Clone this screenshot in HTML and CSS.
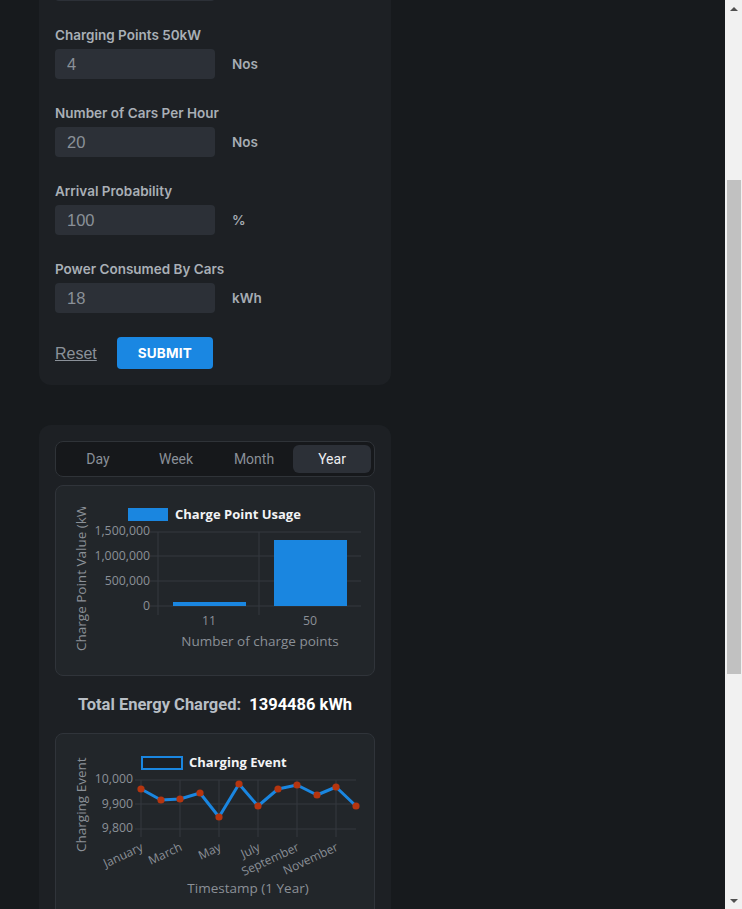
FILE: index.html
```html
<!DOCTYPE html>
<html lang="en">
<head>
<meta charset="utf-8">
<title>Charging Simulation</title>
<link rel="stylesheet" href="styles.css">
</head>
<body>
<main class="page">
  <section class="card">
    <h2 class="card-title">Simulation Parameters</h2>
    <div class="fields">
      <div class="field">
        <label class="field-label">Charging Points 7kW</label>
        <div class="input-row"><input class="num-input" type="text" value="6" readonly><span class="unit">Nos</span></div>
      </div>
      <div class="field">
        <label class="field-label">Charging Points 11kW</label>
        <div class="input-row"><input class="num-input" type="text" value="2" readonly><span class="unit">Nos</span></div>
      </div>
      <div class="field">
        <label class="field-label">Charging Points 22kW</label>
        <div class="input-row"><input class="num-input" type="text" value="0" readonly><span class="unit">Nos</span></div>
      </div>
      <div class="field">
        <label class="field-label">Charging Points 50kW</label>
        <div class="input-row"><input class="num-input" type="text" value="4" readonly><span class="unit">Nos</span></div>
      </div>
      <div class="field">
        <label class="field-label">Number of Cars Per Hour</label>
        <div class="input-row"><input class="num-input" type="text" value="20" readonly><span class="unit">Nos</span></div>
      </div>
      <div class="field">
        <label class="field-label">Arrival Probability</label>
        <div class="input-row"><input class="num-input" type="text" value="100" readonly><span class="unit">%</span></div>
      </div>
      <div class="field">
        <label class="field-label">Power Consumed By Cars</label>
        <div class="input-row"><input class="num-input" type="text" value="18" readonly><span class="unit">kWh</span></div>
      </div>
    </div>
    <div class="actions">
      <a class="reset-link" href="#">Reset</a>
      <button class="submit-btn" type="button">SUBMIT</button>
    </div>
  </section>

  <section class="card">
    <div class="tabs">
      <button class="tab" type="button">Day</button>
      <button class="tab" type="button">Week</button>
      <button class="tab" type="button">Month</button>
      <button class="tab tab-active" type="button">Year</button>
    </div>

    <div class="chart-box">
      <svg class="chart" width="318" height="189" viewBox="0 0 318 189">
        <defs>
          <clipPath id="clipTitle"><rect x="0" y="21" width="60" height="168"/></clipPath>
        </defs>
        <rect x="72" y="22" width="40" height="13" fill="#1a86e0"/>
        <text class="legend-text" x="119" y="33">Charge Point Usage</text>
        <g clip-path="url(#clipTitle)">
          <text class="axis-title" transform="translate(30,165) rotate(-90)">Charge Point Value (kWh)</text>
        </g>
        <g class="grid">
          <line x1="94" y1="46" x2="305" y2="46"/>
          <line x1="94" y1="70" x2="305" y2="70"/>
          <line x1="94" y1="95" x2="305" y2="95"/>
          <line x1="94" y1="120" x2="305" y2="120"/>
          <line x1="102" y1="46" x2="102" y2="129"/>
          <line x1="203" y1="46" x2="203" y2="129"/>
        </g>
        <g class="tick-y">
          <text x="94" y="49">1,500,000</text>
          <text x="94" y="74">1,000,000</text>
          <text x="94" y="99">500,000</text>
          <text x="94" y="124">0</text>
        </g>
        <rect x="117" y="116" width="73" height="4" fill="#1a86e0"/>
        <rect x="218" y="54" width="73" height="66" fill="#1a86e0"/>
        <g class="tick-x">
          <text x="153" y="139">11</text>
          <text x="254" y="139">50</text>
        </g>
        <text class="axis-title center" x="204" y="160">Number of charge points</text>
      </svg>
    </div>

    <p class="total">
      <span class="total-label">Total Energy Charged:</span>
      <span class="total-value">1394486 kWh</span>
    </p>

    <div class="chart-box">
      <svg class="chart" width="318" height="189" viewBox="0 0 318 189">
        <rect x="86" y="23" width="40" height="12" fill="#1b1f24" stroke="#1a86e0" stroke-width="2"/>
        <text class="legend-text" x="133" y="33">Charging Event</text>
        <text class="axis-title" transform="translate(30,118) rotate(-90)">Charging Event</text>
        <g class="grid">
          <line x1="79" y1="46" x2="300" y2="46"/>
          <line x1="79" y1="70" x2="300" y2="70"/>
          <line x1="79" y1="95" x2="300" y2="95"/>
          <line x1="85" y1="46" x2="85" y2="103"/>
          <line x1="124" y1="46" x2="124" y2="103"/>
          <line x1="163" y1="46" x2="163" y2="103"/>
          <line x1="202" y1="46" x2="202" y2="103"/>
          <line x1="241" y1="46" x2="241" y2="103"/>
          <line x1="280" y1="46" x2="280" y2="103"/>
        </g>
        <g class="tick-y">
          <text x="77" y="49">10,000</text>
          <text x="77" y="74">9,900</text>
          <text x="77" y="98">9,800</text>
        </g>
        <polyline fill="none" stroke="#1a86e0" stroke-width="3" stroke-linejoin="round"
          points="85,55 105,66 124,65 144,59 163,83 183,50 202,72 222,55 241,51 261,61 280,53 300,72"/>
        <g fill="#b5350f">
          <circle cx="85" cy="55" r="3.6"/>
          <circle cx="105" cy="66" r="3.6"/>
          <circle cx="124" cy="65" r="3.6"/>
          <circle cx="144" cy="59" r="3.6"/>
          <circle cx="163" cy="83" r="3.6"/>
          <circle cx="183" cy="50" r="3.6"/>
          <circle cx="202" cy="72" r="3.6"/>
          <circle cx="222" cy="55" r="3.6"/>
          <circle cx="241" cy="51" r="3.6"/>
          <circle cx="261" cy="61" r="3.6"/>
          <circle cx="280" cy="53" r="3.6"/>
          <circle cx="300" cy="72" r="3.6"/>
        </g>
        <g class="tick-x-rot">
          <text transform="translate(88,116) rotate(-25)">January</text>
          <text transform="translate(127,116) rotate(-25)">March</text>
          <text transform="translate(166,116) rotate(-25)">May</text>
          <text transform="translate(205,116) rotate(-25)">July</text>
          <text transform="translate(244,116) rotate(-25)">September</text>
          <text transform="translate(283,116) rotate(-25)">November</text>
        </g>
        <text class="axis-title center" x="192" y="159">Timestamp (1 Year)</text>
      </svg>
    </div>
  </section>
</main>

<div class="scrollbar" aria-hidden="true">
  <span class="sb-arrow sb-up"></span>
  <div class="sb-track"><div class="sb-thumb"></div></div>
  <span class="sb-arrow sb-down"></span>
</div>

<script src="script.js"></script>
</body>
</html>
```

FILE: styles.css
```css
html, body {
  margin: 0;
  padding: 0;
  background: #171a1d;
}

body {
  font-family: "Liberation Sans", Arial, sans-serif;
  color: #e6e8eb;
}

.page {
  width: 352px;
  padding: 24px 0 370px 39px;
  display: flex;
  flex-direction: column;
  gap: 40px;
}

.card {
  background: #1d2024;
  border-radius: 12px;
  padding: 16px;
}

.card-title {
  margin: 0 0 24px;
  font: 700 18px/28px Inter, "Noto Sans", sans-serif;
  color: #d6dadf;
}

.fields {
  display: flex;
  flex-direction: column;
  gap: 25px;
}

.field {
  display: flex;
  flex-direction: column;
  gap: 5px;
}

.field-label {
  font: 600 13.5px/18px Inter, "Noto Sans", sans-serif;
  color: #a9afb6;
}

.input-row {
  display: flex;
  align-items: center;
  gap: 17px;
}

.num-input {
  box-sizing: border-box;
  width: 160px;
  height: 30px;
  border: none;
  outline: none;
  border-radius: 4px;
  background: #2c3037;
  padding: 0 12px;
  font: 16.5px "Liberation Sans", Arial, sans-serif;
  color: #8a9098;
}

.unit {
  font: 600 13.5px Inter, "Noto Sans", sans-serif;
  color: #a6acb3;
}

.actions {
  margin-top: 24px;
  display: flex;
  align-items: center;
  gap: 20px;
}

.reset-link {
  font: 16px "Liberation Sans", Arial, sans-serif;
  color: #8b9199;
  text-decoration: underline;
  padding-top: 1px;
}

.submit-btn {
  width: 96px;
  height: 32px;
  border: none;
  border-radius: 4px;
  background: #1a87e2;
  color: #ffffff;
  font: 700 13.5px Inter, "Noto Sans", sans-serif;
  letter-spacing: 0.2px;
  padding: 0;
}

.tabs {
  box-sizing: border-box;
  height: 36px;
  display: grid;
  grid-template-columns: repeat(4, 1fr);
  padding: 3px;
  border: 1px solid #2f3338;
  border-radius: 8px;
  background: #16181b;
}

.tab {
  border: none;
  background: transparent;
  border-radius: 6px;
  font: 14px Roboto, "Liberation Sans", sans-serif;
  color: #8a9098;
  padding: 0;
}

.tab-active {
  background: #2c3037;
  color: #eceef0;
}

.chart-box {
  margin-top: 8px;
  border: 1px solid #30343a;
  border-radius: 8px;
  background: #22262a;
  height: 189px;
}

.total + .chart-box {
  margin-top: 0;
}

.chart {
  display: block;
  font-family: "Open Sans", Roboto, sans-serif;
}

.legend-text {
  font-size: 13px;
  font-weight: 700;
  fill: #f2f3f5;
}

.axis-title {
  font-size: 13.5px;
  fill: #8b9097;
}

.axis-title.center {
  text-anchor: middle;
}

.grid line {
  stroke: #34383e;
  stroke-width: 1;
}

.tick-y text {
  font-size: 12.3px;
  fill: #8b9097;
  text-anchor: end;
}

.tick-x text {
  font-size: 12.3px;
  fill: #8b9097;
  text-anchor: middle;
}

.tick-x-rot text {
  font-size: 12px;
  fill: #8b9097;
  text-anchor: end;
}

.total {
  margin: 0;
  padding: 18px 0;
  text-align: center;
  font: 700 16.5px/21px Roboto, "Open Sans", sans-serif;
}

.total-label {
  color: #b8bec5;
  margin-right: 4px;
}

.total-value {
  color: #ffffff;
}

/* browser-style vertical scrollbar overlay */
.scrollbar {
  position: fixed;
  top: 0;
  right: 0;
  bottom: 0;
  width: 17px;
  background: #f1f1f1;
  display: flex;
  flex-direction: column;
}

.sb-arrow {
  height: 17px;
  flex: none;
  display: flex;
  align-items: center;
  justify-content: center;
}

.sb-up::before,
.sb-down::before {
  content: "";
  width: 0;
  height: 0;
  border-left: 4px solid transparent;
  border-right: 4px solid transparent;
}

.sb-up::before {
  border-bottom: 4px solid #505050;
}

.sb-down::before {
  border-top: 4px solid #505050;
}

.sb-track {
  flex: 1;
  padding: 0 1px 0 2px;
}

.sb-thumb {
  margin-top: 163px;
  height: 494px;
  background: #c1c1c1;
}
```

FILE: script.js
```js
window.scrollTo(0, 300);
window.addEventListener('load', function () {
  window.scrollTo(0, 300);
});
```
